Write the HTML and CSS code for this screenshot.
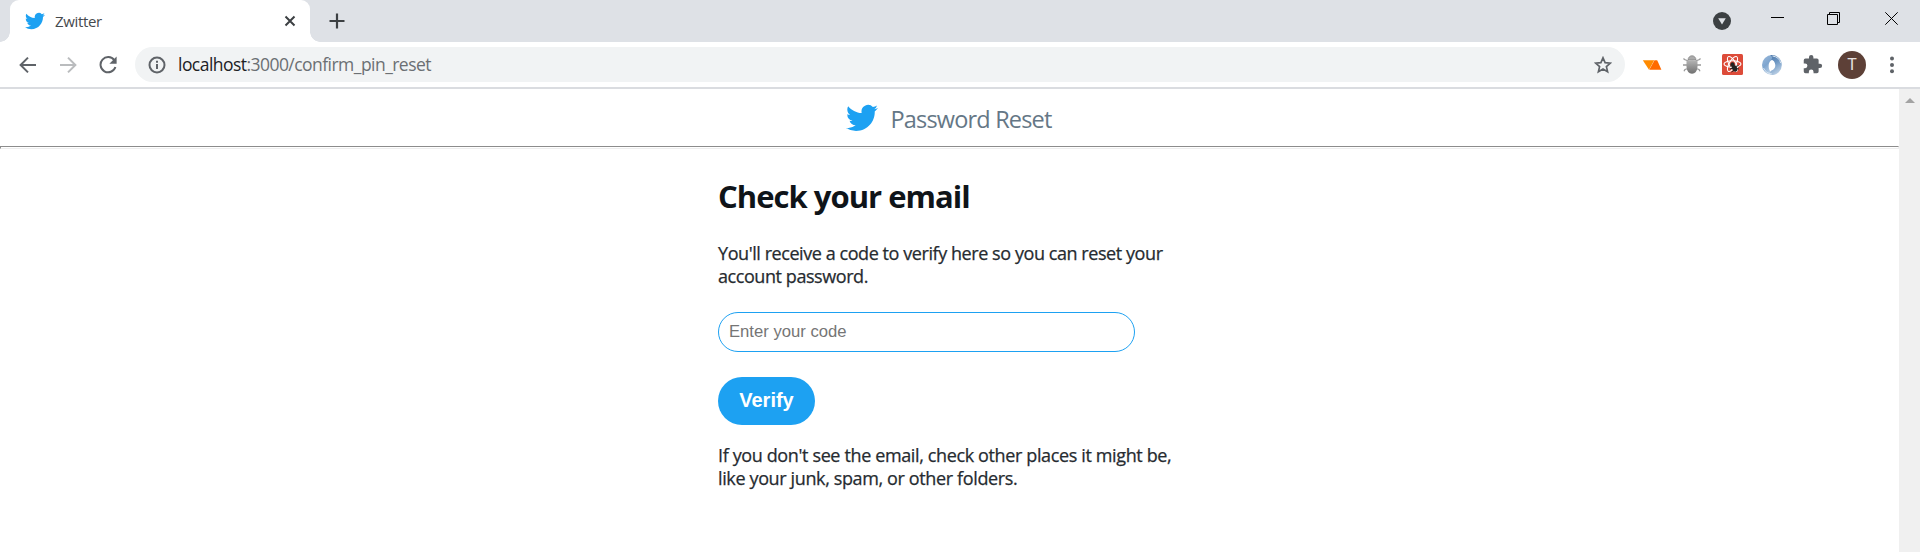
FILE: index.html
```html
<!DOCTYPE html>
<html lang="en">
<head>
<meta charset="utf-8">
<title>Zwitter</title>
<link rel="stylesheet" href="styles.css">
</head>
<body>
<svg width="0" height="0" class="defs">
  <symbol id="bird" viewBox="0 0 24 24"><path d="M23.954 4.569a10 10 0 0 1-2.825.775 4.958 4.958 0 0 0 2.163-2.723 9.99 9.99 0 0 1-3.127 1.184 4.92 4.92 0 0 0-8.384 4.482C7.691 8.094 4.066 6.13 1.64 3.161a4.822 4.822 0 0 0-.666 2.475c0 1.71.87 3.213 2.188 4.096a4.904 4.904 0 0 1-2.228-.616v.061a4.923 4.923 0 0 0 3.946 4.827 4.996 4.996 0 0 1-2.212.085 4.937 4.937 0 0 0 4.604 3.417 9.868 9.868 0 0 1-6.102 2.105c-.39 0-.779-.023-1.17-.067a13.995 13.995 0 0 0 7.557 2.209c9.054 0 13.999-7.496 13.999-13.986 0-.209 0-.42-.015-.63a9.936 9.936 0 0 0 2.46-2.548z"/></symbol>
</svg>
<div class="tabstrip">
  <div class="tab">
    <svg class="favicon" viewBox="0 0 24 24"><use href="#bird"/></svg>
    <span class="tab-title">Zwitter</span>
    <svg class="tab-close" width="12" height="12" viewBox="0 0 12 12"><path d="M1.5 1.5l9 9M10.5 1.5l-9 9"/></svg>
  </div>
  <svg class="new-tab" width="16" height="16" viewBox="0 0 16 16"><path d="M8 .5v15M.5 8h15"/></svg>
  <div class="window-controls">
    <svg class="search-tabs" width="18" height="18" viewBox="0 0 18 18"><circle cx="9" cy="9" r="9" fill="#3c4043"/><path d="M5.2 6.2h7.6L9 12.6z" fill="#dee1e6"/></svg>
    <svg width="13" height="13" viewBox="0 0 13 13"><path d="M0 5.5h13"/></svg>
    <svg width="13" height="13" viewBox="0 0 13 13"><path d="M.5 2.5h10v10H.5zM2.5 2.5v-2h10v10h-2"/></svg>
    <svg width="13" height="13" viewBox="0 0 13 13"><path d="M.3.3l12.4 12.4M12.7.3L.3 12.7"/></svg>
  </div>
</div>
<div class="toolbar">
  <div class="tool"><svg width="18" height="18" viewBox="0 0 18 18" class="line"><path d="M17 9H2M9 1.6L1.6 9 9 16.4"/></svg></div>
  <div class="tool"><svg width="18" height="18" viewBox="0 0 18 18" class="line faded"><path d="M1 9h15M9 1.6L16.4 9 9 16.4"/></svg></div>
  <div class="tool"><svg width="18" height="18" viewBox="0 0 18 18" class="line"><path d="M15.3 4.2A7.6 7.6 0 1 0 16.4 11"/><path d="M17.6.6v7.2h-7.2z" fill="#5f6368" stroke="none"/></svg></div>
  <div class="omnibox">
    <svg width="18" height="18" viewBox="0 0 18 18" class="line info"><circle cx="9" cy="9" r="7.5"/><path d="M9 8v5M9 4.8v2"/></svg>
    <span class="url"><b>localhost</b>:3000/confirm_pin_reset</span>
    <svg class="star" width="18" height="18" viewBox="0 0 18 18"><path d="M9 1.8l2.100 4.800 5.300.5-4 3.500 1.200 5.200L9 13.100l-4.600 2.700 1.200-5.200-4-3.500 5.300-.5z"/></svg>
  </div>
  <div class="tool"><svg width="20" height="12" viewBox="0 0 20 12"><path d="M.8 1.300h11.400L7 10.800z" fill="#ff8a00"/><path d="M12.500 1.300H15.200l4.200 9.500H7.300z" fill="#ff6a00"/></svg></div>
  <div class="tool"><svg width="20" height="20" viewBox="0 0 20 20">
    <defs><linearGradient id="shell" x2="0" y2="1"><stop offset="0" stop-color="#b5b5b5"/><stop offset="1" stop-color="#707070"/></linearGradient></defs>
    <path d="M6.5 6L2.500 4.500 1.500 3.500M5 10H1M6 13.500l-3 1-1 1.800M13.500 6l4-1.500 1-1M15 10h4M14 13.500l3 1 1 1.800" fill="none" stroke="#999" stroke-width="1.3"/>
    <path d="M6 5a4 4.300 0 0 1 8 0z" fill="#aaa" stroke="#777" stroke-width=".6"/><path d="M4.500 6q5.500-1.800 11 0v6q-.7 6.700-5.500 6.700T4.500 12z" fill="url(#shell)"/></svg></div>
  <div class="tool"><svg width="21" height="21" viewBox="0 0 21 21"><rect width="21" height="21" rx="1.500" fill="#dd4b39"/>
    <g fill="none" stroke="#fff" stroke-width="1.1"><ellipse cx="10.500" cy="10" rx="8.500" ry="3.300"/><ellipse cx="10.500" cy="10" rx="8.500" ry="3.300" transform="rotate(60 10.500 10)"/><ellipse cx="10.500" cy="10" rx="8.500" ry="3.300" transform="rotate(120 10.500 10)"/></g>
    <circle cx="10.500" cy="10.300" r="2" fill="#222"/><ellipse cx="12.600" cy="14.300" rx="2.500" ry="3.500" transform="rotate(-28 12.600 14.300)" fill="#222"/><path d="M8 15l3-1M9.500 18l3-2M14 12.500l2.500-1M14.500 14.500l2.500.5M8 12h3" stroke="#222"/></svg></div>
  <div class="tool"><svg width="20" height="20" viewBox="0 0 20 20">
    <defs><linearGradient id="ringA" x2=".6" y2="1"><stop offset="0" stop-color="#9dbbdb"/><stop offset=".5" stop-color="#7ea5cf"/><stop offset="1" stop-color="#c6d8ea"/></linearGradient><linearGradient id="ringB" x2=".4" y2="1"><stop offset="0" stop-color="#4a76a8"/><stop offset=".5" stop-color="#6f98c4"/><stop offset="1" stop-color="#b9cee4"/></linearGradient></defs>
    <path d="M10 0a10 10 0 0 0 0 20q2 0 3-.5C8 18 6.500 14 6.700 10.500 7 6.500 9 4.500 13 4.500 10.500 3.500 9.500 2 10 0z" fill="url(#ringA)"/>
    <path d="M8 .2A10 10 0 1 1 9 20C7.500 18 8 16.500 9.500 15.500 12 14.500 13.500 12.500 13.300 10 13 7 11.500 5 9 4.500 11 3 10 1 8 .2z" fill="url(#ringB)"/>
    <path d="M1.500 13Q4 18.500 10 19M10.500 1Q17.500 2 18.700 8" fill="none" stroke="#d7e4f1" stroke-width="1"/></svg></div>
  <div class="tool"><svg class="puzzle" width="21" height="21" viewBox="0 0 24 24"><path d="M20.500 11H19V7a2 2 0 0 0-2-2h-4V3.500a2.500 2.500 0 0 0-5 0V5H4a2 2 0 0 0-2 2v3.800h1.500a2.700 2.700 0 0 1 0 5.400H2V20a2 2 0 0 0 2 2h3.800v-1.500a2.700 2.700 0 0 1 5.400 0V22H17a2 2 0 0 0 2-2v-4h1.500a2.500 2.500 0 0 0 0-5z"/></svg></div>
  <div class="tool"><span class="avatar">T</span></div>
  <div class="tool"><svg width="4" height="18" viewBox="0 0 4 18" fill="#5f6368"><circle cx="2" cy="2.500" r="2"/><circle cx="2" cy="9" r="2"/><circle cx="2" cy="15.300" r="2"/></svg></div>
</div>
<div class="viewport">
  <div class="page">
    <header class="page-header">
      <svg class="logo" viewBox="0 0 24 24"><use href="#bird"/></svg>
      <span class="page-title">Password Reset</span>
    </header>
    <hr class="rule">
    <main class="content">
      <h1 class="heading">Check your email</h1>
      <p class="text receive">You'll receive a code to verify here so you can reset your<br>account password.</p>
      <input class="code" type="text" placeholder="Enter your code">
      <button class="verify">Verify</button>
      <p class="text hint">If you don't see the email, check other places it might be,<br>like your junk, spam, or other folders.</p>
    </main>
  </div>
  <div class="scrollbar"><svg width="10" height="5" viewBox="0 0 10 5"><path d="M5 0l5 5H0z" fill="#a3a3a3"/></svg></div>
</div>
</body>
</html>
```
FILE: styles.css
```css
* { box-sizing: border-box; }
body { margin: 0; height: 552px; overflow: hidden; display: flex; flex-direction: column; background: #fff; font-family: "Open Sans", "Noto Sans", sans-serif; }
svg { display: block; flex: none; }
.defs { position: absolute; }
.tabstrip { height: 42px; flex: none; display: flex; background: #dee1e6; padding-left: 10px; }
.tab { position: relative; width: 300px; background: #fff; border-radius: 9px 9px 0 0; display: flex; align-items: center; padding: 0 14px 0 15px; }
.tab::before, .tab::after { content: ""; position: absolute; bottom: 0; width: 10px; height: 10px; }
.tab::before { left: -10px; background: radial-gradient(circle at 0 0, #dee1e6 9.5px, #fff 10px); }
.tab::after { right: -10px; background: radial-gradient(circle at 100% 0, #dee1e6 9.5px, #fff 10px); }
.favicon { width: 20px; height: 20px; fill: #1da1f2; }
.tab-title { margin: -1px 0 0 10px; font-size: 15px; line-height: 20px; color: #45494d; letter-spacing: -.35px; flex: 1; }
.tab-close { fill: none; stroke: #3c4043; stroke-width: 2; }
.new-tab { margin: 13px 0 0 19px; fill: none; stroke: #3c4043; stroke-width: 2.2; }
.window-controls { margin-left: auto; padding: 12px 22px 0 0; display: flex; fill: none; stroke: #000; gap: 44px; }
.window-controls svg:nth-child(2) { margin-right: -1px; }
.window-controls svg:nth-child(3) { margin-right: 1px; }
.search-tabs { margin-right: -4px; stroke: none; }
.toolbar { height: 47px; flex: none; display: flex; align-items: center; padding: 0 8px; border-bottom: 2px solid #dadce0; }
.tool { width: 40px; display: flex; justify-content: center; }
.line { fill: none; stroke: #5f6368; stroke-width: 2; }
.faded { stroke: #babcbe; }
.omnibox { flex: 1; height: 35px; margin: 0 7px; padding: 0 13px; border-radius: 18px; background: #f1f3f4; display: flex; align-items: center; }
.url { flex: 1; margin: -2px 0 0 12px; font-size: 17.5px; line-height: 24px; letter-spacing: -.54px; color: #6b6f73; white-space: nowrap; }
.url b { font-weight: 400; color: #202124; }
.star { fill: none; stroke: #5f6368; stroke-width: 1.7; }
.puzzle { fill: #5f6368; }
.avatar { width: 28px; height: 28px; border-radius: 50%; background: #5d4037; color: #e8e2e0; font: 16px/28px Roboto, sans-serif; text-align: center; }
.viewport { flex: 1; display: flex; }
.page { flex: 1; }
.page-header { height: 57px; display: flex; justify-content: center; padding: 12px 1px 0 0; }
.logo { width: 32px; height: 32px; margin-top: 1px; fill: #1da1f2; }
.page-title { margin: 2px 0 0 12px; font-size: 23.5px; line-height: 32px; letter-spacing: -.82px; color: #657786; white-space: nowrap; }
.rule { margin: 0; height: 3px; border: 1px solid; border-color: #8c8c8c #eee #eee #8c8c8c; }
.content { width: 463px; margin: 0 0 0 718px; padding-top: 27px; display: flex; flex-direction: column; align-items: flex-start; }
.heading { margin: 0; font-size: 31px; line-height: 40px; font-weight: 700; letter-spacing: -.98px; color: #0f1419; white-space: nowrap; }
.text { margin: 0; font-size: 18px; line-height: 23px; letter-spacing: -.43px; color: #262b30; white-space: nowrap; -webkit-text-stroke: .25px #262b30; }
.receive { margin-top: 26px; }
.code { width: 417px; height: 40px; margin-top: 24px; padding: 0 10px; border: 1px solid #1da1f2; border-radius: 20px; font: 16.667px "Liberation Sans", Arial, sans-serif; background: #fff; }
.code::placeholder { color: #757575; }
.verify { width: 97px; height: 48px; margin-top: 25px; padding: 0 0 2px; border: 0; border-radius: 24px; background: #1da1f2; color: #fff; font: bold 20px "Liberation Sans", Arial, sans-serif; }
.hint { margin-top: 19px; letter-spacing: -.37px; }
.scrollbar { width: 21px; background: #f0f0f0; padding: 9px 0 0 6px; }
```
